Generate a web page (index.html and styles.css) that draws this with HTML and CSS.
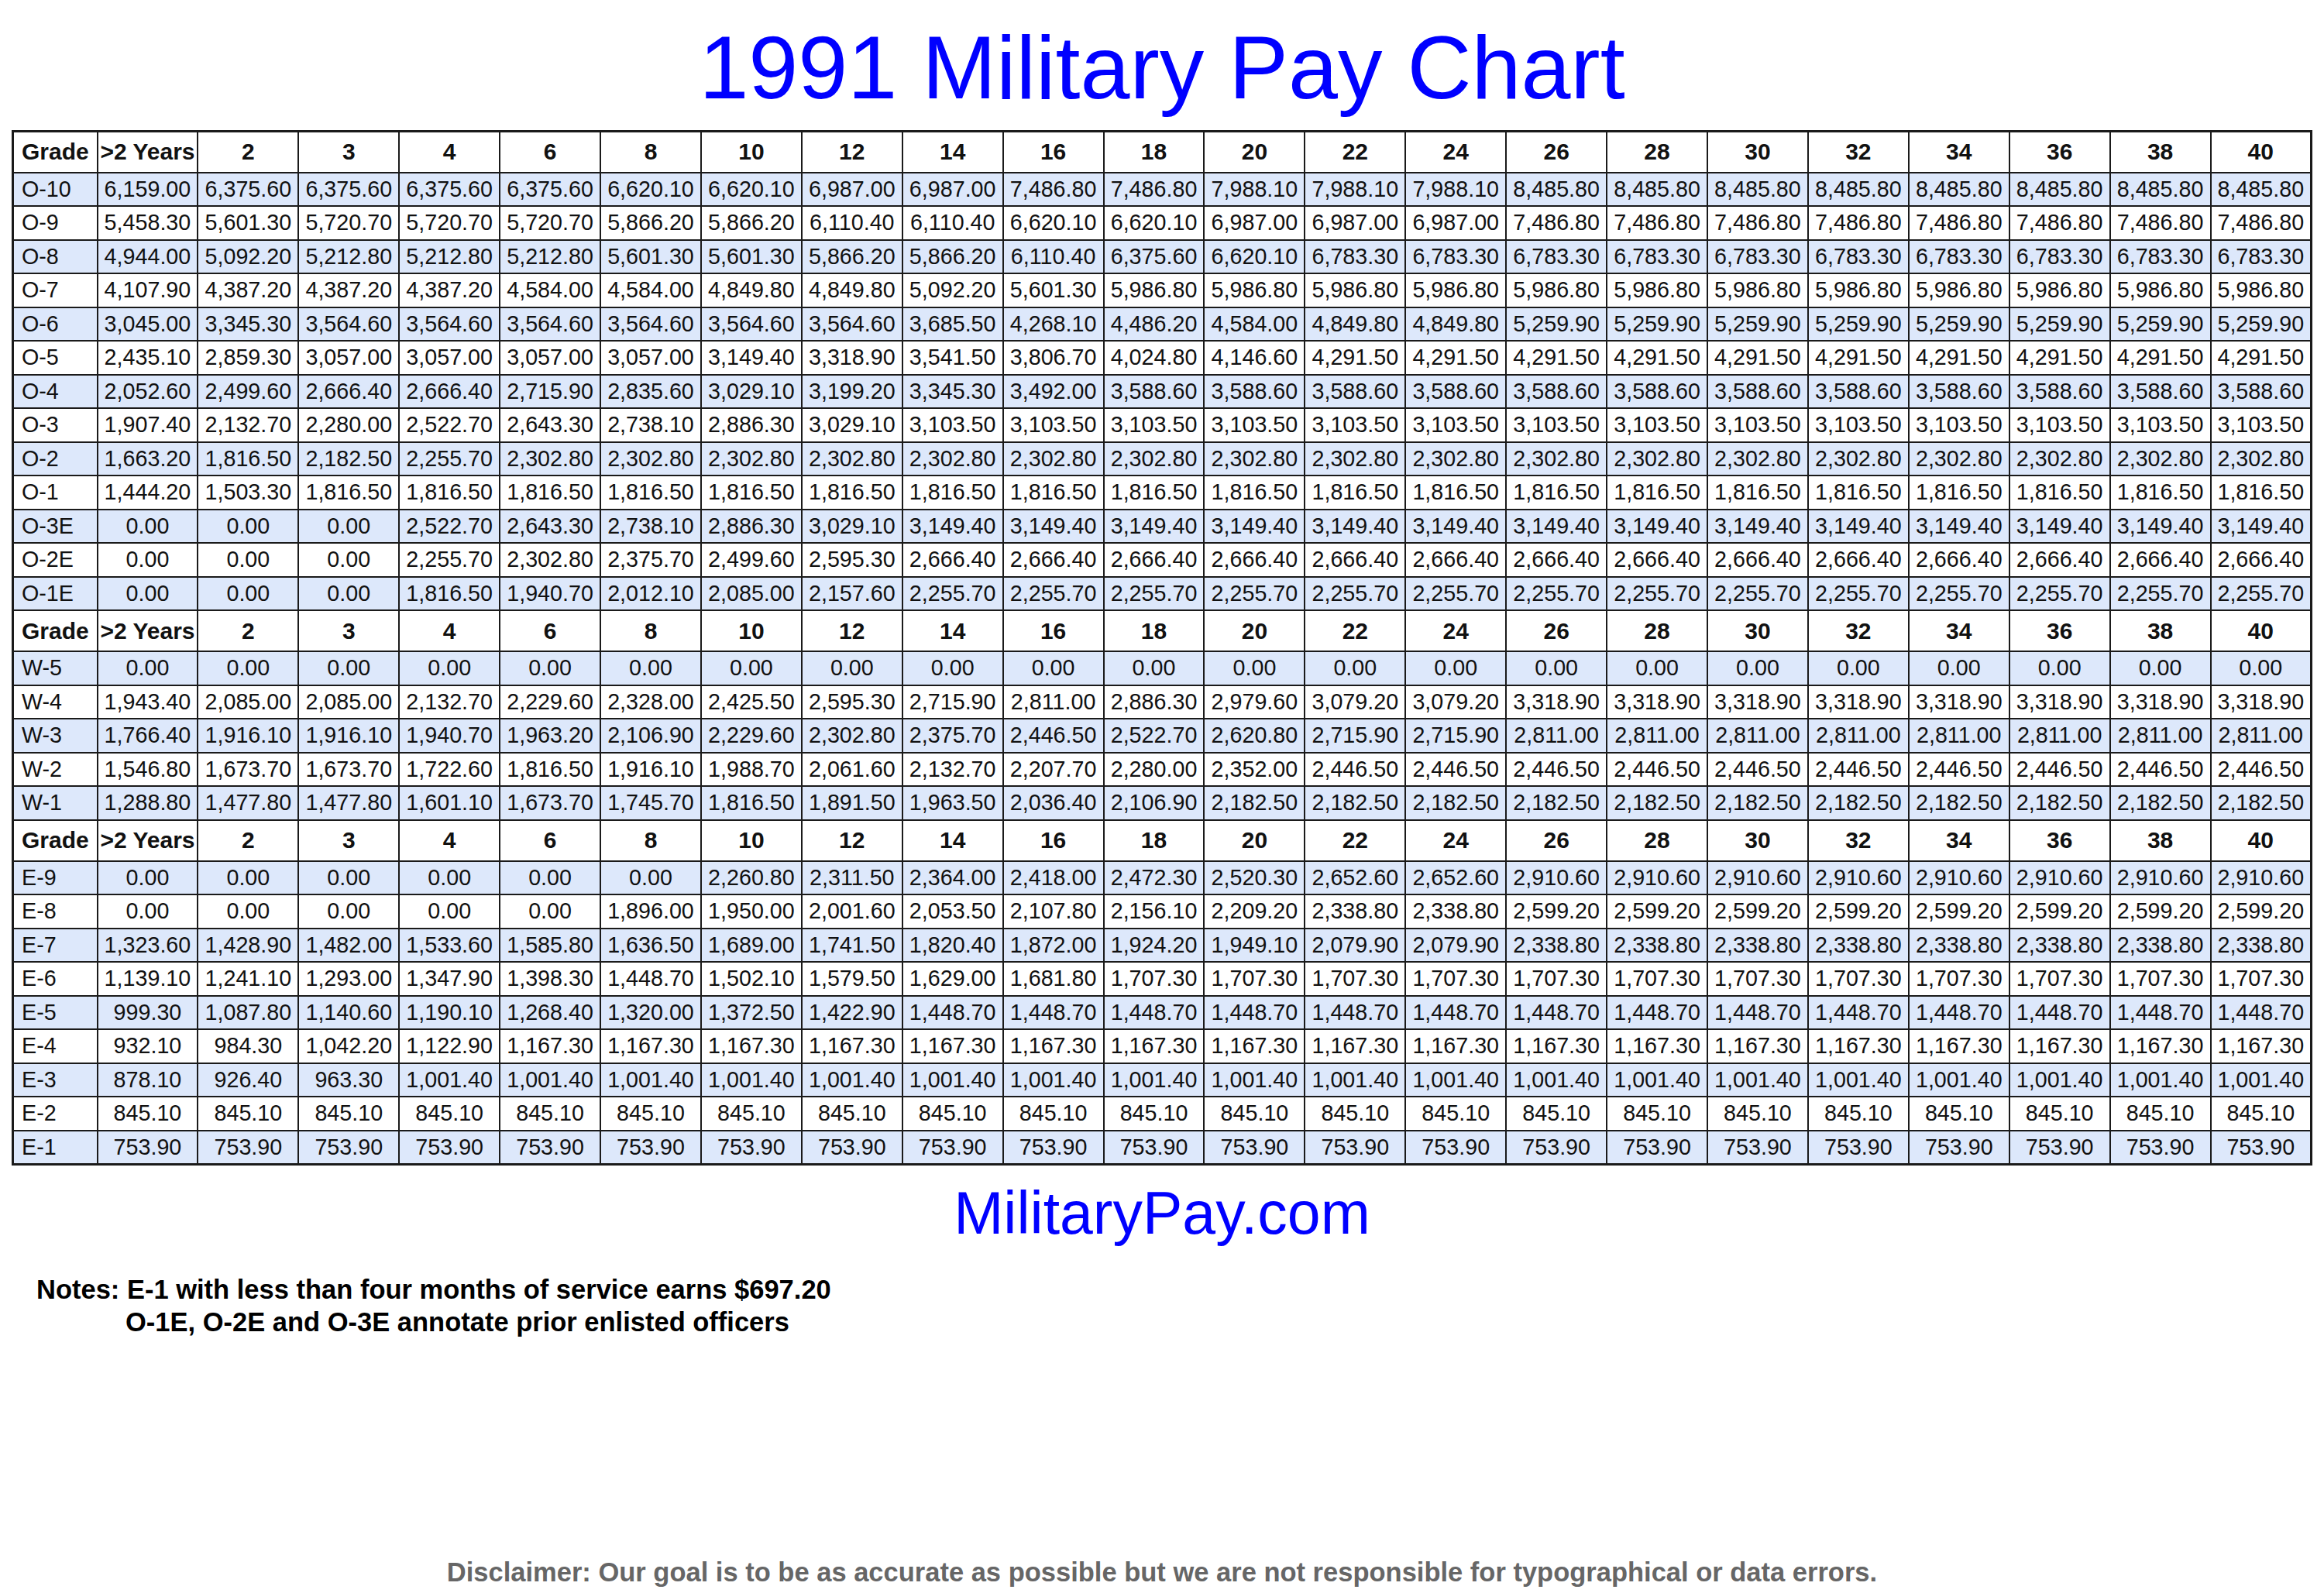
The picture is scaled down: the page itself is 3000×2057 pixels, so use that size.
FILE: index.html
```html
<!DOCTYPE html>
<html lang="en">
<head>
<meta charset="utf-8">
<title>1991 Military Pay Chart</title>
<link rel="stylesheet" href="styles.css">
</head>
<body>
<main class="page">
<h1 class="title">1991 Military Pay Chart</h1>
<table class="pay">
<colgroup><col class="gc"><col span="22"></colgroup>
<tbody>
<tr class="hd"><th class="g">Grade</th><th>&gt;2 Years</th><th>2</th><th>3</th><th>4</th><th>6</th><th>8</th><th>10</th><th>12</th><th>14</th><th>16</th><th>18</th><th>20</th><th>22</th><th>24</th><th>26</th><th>28</th><th>30</th><th>32</th><th>34</th><th>36</th><th>38</th><th>40</th></tr>
<tr class="b"><td class="g">O-10</td><td>6,159.00</td><td>6,375.60</td><td>6,375.60</td><td>6,375.60</td><td>6,375.60</td><td>6,620.10</td><td>6,620.10</td><td>6,987.00</td><td>6,987.00</td><td>7,486.80</td><td>7,486.80</td><td>7,988.10</td><td>7,988.10</td><td>7,988.10</td><td>8,485.80</td><td>8,485.80</td><td>8,485.80</td><td>8,485.80</td><td>8,485.80</td><td>8,485.80</td><td>8,485.80</td><td>8,485.80</td></tr>
<tr><td class="g">O-9</td><td>5,458.30</td><td>5,601.30</td><td>5,720.70</td><td>5,720.70</td><td>5,720.70</td><td>5,866.20</td><td>5,866.20</td><td>6,110.40</td><td>6,110.40</td><td>6,620.10</td><td>6,620.10</td><td>6,987.00</td><td>6,987.00</td><td>6,987.00</td><td>7,486.80</td><td>7,486.80</td><td>7,486.80</td><td>7,486.80</td><td>7,486.80</td><td>7,486.80</td><td>7,486.80</td><td>7,486.80</td></tr>
<tr class="b"><td class="g">O-8</td><td>4,944.00</td><td>5,092.20</td><td>5,212.80</td><td>5,212.80</td><td>5,212.80</td><td>5,601.30</td><td>5,601.30</td><td>5,866.20</td><td>5,866.20</td><td>6,110.40</td><td>6,375.60</td><td>6,620.10</td><td>6,783.30</td><td>6,783.30</td><td>6,783.30</td><td>6,783.30</td><td>6,783.30</td><td>6,783.30</td><td>6,783.30</td><td>6,783.30</td><td>6,783.30</td><td>6,783.30</td></tr>
<tr><td class="g">O-7</td><td>4,107.90</td><td>4,387.20</td><td>4,387.20</td><td>4,387.20</td><td>4,584.00</td><td>4,584.00</td><td>4,849.80</td><td>4,849.80</td><td>5,092.20</td><td>5,601.30</td><td>5,986.80</td><td>5,986.80</td><td>5,986.80</td><td>5,986.80</td><td>5,986.80</td><td>5,986.80</td><td>5,986.80</td><td>5,986.80</td><td>5,986.80</td><td>5,986.80</td><td>5,986.80</td><td>5,986.80</td></tr>
<tr class="b"><td class="g">O-6</td><td>3,045.00</td><td>3,345.30</td><td>3,564.60</td><td>3,564.60</td><td>3,564.60</td><td>3,564.60</td><td>3,564.60</td><td>3,564.60</td><td>3,685.50</td><td>4,268.10</td><td>4,486.20</td><td>4,584.00</td><td>4,849.80</td><td>4,849.80</td><td>5,259.90</td><td>5,259.90</td><td>5,259.90</td><td>5,259.90</td><td>5,259.90</td><td>5,259.90</td><td>5,259.90</td><td>5,259.90</td></tr>
<tr><td class="g">O-5</td><td>2,435.10</td><td>2,859.30</td><td>3,057.00</td><td>3,057.00</td><td>3,057.00</td><td>3,057.00</td><td>3,149.40</td><td>3,318.90</td><td>3,541.50</td><td>3,806.70</td><td>4,024.80</td><td>4,146.60</td><td>4,291.50</td><td>4,291.50</td><td>4,291.50</td><td>4,291.50</td><td>4,291.50</td><td>4,291.50</td><td>4,291.50</td><td>4,291.50</td><td>4,291.50</td><td>4,291.50</td></tr>
<tr class="b"><td class="g">O-4</td><td>2,052.60</td><td>2,499.60</td><td>2,666.40</td><td>2,666.40</td><td>2,715.90</td><td>2,835.60</td><td>3,029.10</td><td>3,199.20</td><td>3,345.30</td><td>3,492.00</td><td>3,588.60</td><td>3,588.60</td><td>3,588.60</td><td>3,588.60</td><td>3,588.60</td><td>3,588.60</td><td>3,588.60</td><td>3,588.60</td><td>3,588.60</td><td>3,588.60</td><td>3,588.60</td><td>3,588.60</td></tr>
<tr><td class="g">O-3</td><td>1,907.40</td><td>2,132.70</td><td>2,280.00</td><td>2,522.70</td><td>2,643.30</td><td>2,738.10</td><td>2,886.30</td><td>3,029.10</td><td>3,103.50</td><td>3,103.50</td><td>3,103.50</td><td>3,103.50</td><td>3,103.50</td><td>3,103.50</td><td>3,103.50</td><td>3,103.50</td><td>3,103.50</td><td>3,103.50</td><td>3,103.50</td><td>3,103.50</td><td>3,103.50</td><td>3,103.50</td></tr>
<tr class="b"><td class="g">O-2</td><td>1,663.20</td><td>1,816.50</td><td>2,182.50</td><td>2,255.70</td><td>2,302.80</td><td>2,302.80</td><td>2,302.80</td><td>2,302.80</td><td>2,302.80</td><td>2,302.80</td><td>2,302.80</td><td>2,302.80</td><td>2,302.80</td><td>2,302.80</td><td>2,302.80</td><td>2,302.80</td><td>2,302.80</td><td>2,302.80</td><td>2,302.80</td><td>2,302.80</td><td>2,302.80</td><td>2,302.80</td></tr>
<tr><td class="g">O-1</td><td>1,444.20</td><td>1,503.30</td><td>1,816.50</td><td>1,816.50</td><td>1,816.50</td><td>1,816.50</td><td>1,816.50</td><td>1,816.50</td><td>1,816.50</td><td>1,816.50</td><td>1,816.50</td><td>1,816.50</td><td>1,816.50</td><td>1,816.50</td><td>1,816.50</td><td>1,816.50</td><td>1,816.50</td><td>1,816.50</td><td>1,816.50</td><td>1,816.50</td><td>1,816.50</td><td>1,816.50</td></tr>
<tr class="b"><td class="g">O-3E</td><td>0.00</td><td>0.00</td><td>0.00</td><td>2,522.70</td><td>2,643.30</td><td>2,738.10</td><td>2,886.30</td><td>3,029.10</td><td>3,149.40</td><td>3,149.40</td><td>3,149.40</td><td>3,149.40</td><td>3,149.40</td><td>3,149.40</td><td>3,149.40</td><td>3,149.40</td><td>3,149.40</td><td>3,149.40</td><td>3,149.40</td><td>3,149.40</td><td>3,149.40</td><td>3,149.40</td></tr>
<tr><td class="g">O-2E</td><td>0.00</td><td>0.00</td><td>0.00</td><td>2,255.70</td><td>2,302.80</td><td>2,375.70</td><td>2,499.60</td><td>2,595.30</td><td>2,666.40</td><td>2,666.40</td><td>2,666.40</td><td>2,666.40</td><td>2,666.40</td><td>2,666.40</td><td>2,666.40</td><td>2,666.40</td><td>2,666.40</td><td>2,666.40</td><td>2,666.40</td><td>2,666.40</td><td>2,666.40</td><td>2,666.40</td></tr>
<tr class="b"><td class="g">O-1E</td><td>0.00</td><td>0.00</td><td>0.00</td><td>1,816.50</td><td>1,940.70</td><td>2,012.10</td><td>2,085.00</td><td>2,157.60</td><td>2,255.70</td><td>2,255.70</td><td>2,255.70</td><td>2,255.70</td><td>2,255.70</td><td>2,255.70</td><td>2,255.70</td><td>2,255.70</td><td>2,255.70</td><td>2,255.70</td><td>2,255.70</td><td>2,255.70</td><td>2,255.70</td><td>2,255.70</td></tr>
<tr class="hd"><th class="g">Grade</th><th>&gt;2 Years</th><th>2</th><th>3</th><th>4</th><th>6</th><th>8</th><th>10</th><th>12</th><th>14</th><th>16</th><th>18</th><th>20</th><th>22</th><th>24</th><th>26</th><th>28</th><th>30</th><th>32</th><th>34</th><th>36</th><th>38</th><th>40</th></tr>
<tr class="b"><td class="g">W-5</td><td>0.00</td><td>0.00</td><td>0.00</td><td>0.00</td><td>0.00</td><td>0.00</td><td>0.00</td><td>0.00</td><td>0.00</td><td>0.00</td><td>0.00</td><td>0.00</td><td>0.00</td><td>0.00</td><td>0.00</td><td>0.00</td><td>0.00</td><td>0.00</td><td>0.00</td><td>0.00</td><td>0.00</td><td>0.00</td></tr>
<tr><td class="g">W-4</td><td>1,943.40</td><td>2,085.00</td><td>2,085.00</td><td>2,132.70</td><td>2,229.60</td><td>2,328.00</td><td>2,425.50</td><td>2,595.30</td><td>2,715.90</td><td>2,811.00</td><td>2,886.30</td><td>2,979.60</td><td>3,079.20</td><td>3,079.20</td><td>3,318.90</td><td>3,318.90</td><td>3,318.90</td><td>3,318.90</td><td>3,318.90</td><td>3,318.90</td><td>3,318.90</td><td>3,318.90</td></tr>
<tr class="b"><td class="g">W-3</td><td>1,766.40</td><td>1,916.10</td><td>1,916.10</td><td>1,940.70</td><td>1,963.20</td><td>2,106.90</td><td>2,229.60</td><td>2,302.80</td><td>2,375.70</td><td>2,446.50</td><td>2,522.70</td><td>2,620.80</td><td>2,715.90</td><td>2,715.90</td><td>2,811.00</td><td>2,811.00</td><td>2,811.00</td><td>2,811.00</td><td>2,811.00</td><td>2,811.00</td><td>2,811.00</td><td>2,811.00</td></tr>
<tr><td class="g">W-2</td><td>1,546.80</td><td>1,673.70</td><td>1,673.70</td><td>1,722.60</td><td>1,816.50</td><td>1,916.10</td><td>1,988.70</td><td>2,061.60</td><td>2,132.70</td><td>2,207.70</td><td>2,280.00</td><td>2,352.00</td><td>2,446.50</td><td>2,446.50</td><td>2,446.50</td><td>2,446.50</td><td>2,446.50</td><td>2,446.50</td><td>2,446.50</td><td>2,446.50</td><td>2,446.50</td><td>2,446.50</td></tr>
<tr class="b"><td class="g">W-1</td><td>1,288.80</td><td>1,477.80</td><td>1,477.80</td><td>1,601.10</td><td>1,673.70</td><td>1,745.70</td><td>1,816.50</td><td>1,891.50</td><td>1,963.50</td><td>2,036.40</td><td>2,106.90</td><td>2,182.50</td><td>2,182.50</td><td>2,182.50</td><td>2,182.50</td><td>2,182.50</td><td>2,182.50</td><td>2,182.50</td><td>2,182.50</td><td>2,182.50</td><td>2,182.50</td><td>2,182.50</td></tr>
<tr class="hd"><th class="g">Grade</th><th>&gt;2 Years</th><th>2</th><th>3</th><th>4</th><th>6</th><th>8</th><th>10</th><th>12</th><th>14</th><th>16</th><th>18</th><th>20</th><th>22</th><th>24</th><th>26</th><th>28</th><th>30</th><th>32</th><th>34</th><th>36</th><th>38</th><th>40</th></tr>
<tr class="b"><td class="g">E-9</td><td>0.00</td><td>0.00</td><td>0.00</td><td>0.00</td><td>0.00</td><td>0.00</td><td>2,260.80</td><td>2,311.50</td><td>2,364.00</td><td>2,418.00</td><td>2,472.30</td><td>2,520.30</td><td>2,652.60</td><td>2,652.60</td><td>2,910.60</td><td>2,910.60</td><td>2,910.60</td><td>2,910.60</td><td>2,910.60</td><td>2,910.60</td><td>2,910.60</td><td>2,910.60</td></tr>
<tr><td class="g">E-8</td><td>0.00</td><td>0.00</td><td>0.00</td><td>0.00</td><td>0.00</td><td>1,896.00</td><td>1,950.00</td><td>2,001.60</td><td>2,053.50</td><td>2,107.80</td><td>2,156.10</td><td>2,209.20</td><td>2,338.80</td><td>2,338.80</td><td>2,599.20</td><td>2,599.20</td><td>2,599.20</td><td>2,599.20</td><td>2,599.20</td><td>2,599.20</td><td>2,599.20</td><td>2,599.20</td></tr>
<tr class="b"><td class="g">E-7</td><td>1,323.60</td><td>1,428.90</td><td>1,482.00</td><td>1,533.60</td><td>1,585.80</td><td>1,636.50</td><td>1,689.00</td><td>1,741.50</td><td>1,820.40</td><td>1,872.00</td><td>1,924.20</td><td>1,949.10</td><td>2,079.90</td><td>2,079.90</td><td>2,338.80</td><td>2,338.80</td><td>2,338.80</td><td>2,338.80</td><td>2,338.80</td><td>2,338.80</td><td>2,338.80</td><td>2,338.80</td></tr>
<tr><td class="g">E-6</td><td>1,139.10</td><td>1,241.10</td><td>1,293.00</td><td>1,347.90</td><td>1,398.30</td><td>1,448.70</td><td>1,502.10</td><td>1,579.50</td><td>1,629.00</td><td>1,681.80</td><td>1,707.30</td><td>1,707.30</td><td>1,707.30</td><td>1,707.30</td><td>1,707.30</td><td>1,707.30</td><td>1,707.30</td><td>1,707.30</td><td>1,707.30</td><td>1,707.30</td><td>1,707.30</td><td>1,707.30</td></tr>
<tr class="b"><td class="g">E-5</td><td>999.30</td><td>1,087.80</td><td>1,140.60</td><td>1,190.10</td><td>1,268.40</td><td>1,320.00</td><td>1,372.50</td><td>1,422.90</td><td>1,448.70</td><td>1,448.70</td><td>1,448.70</td><td>1,448.70</td><td>1,448.70</td><td>1,448.70</td><td>1,448.70</td><td>1,448.70</td><td>1,448.70</td><td>1,448.70</td><td>1,448.70</td><td>1,448.70</td><td>1,448.70</td><td>1,448.70</td></tr>
<tr><td class="g">E-4</td><td>932.10</td><td>984.30</td><td>1,042.20</td><td>1,122.90</td><td>1,167.30</td><td>1,167.30</td><td>1,167.30</td><td>1,167.30</td><td>1,167.30</td><td>1,167.30</td><td>1,167.30</td><td>1,167.30</td><td>1,167.30</td><td>1,167.30</td><td>1,167.30</td><td>1,167.30</td><td>1,167.30</td><td>1,167.30</td><td>1,167.30</td><td>1,167.30</td><td>1,167.30</td><td>1,167.30</td></tr>
<tr class="b"><td class="g">E-3</td><td>878.10</td><td>926.40</td><td>963.30</td><td>1,001.40</td><td>1,001.40</td><td>1,001.40</td><td>1,001.40</td><td>1,001.40</td><td>1,001.40</td><td>1,001.40</td><td>1,001.40</td><td>1,001.40</td><td>1,001.40</td><td>1,001.40</td><td>1,001.40</td><td>1,001.40</td><td>1,001.40</td><td>1,001.40</td><td>1,001.40</td><td>1,001.40</td><td>1,001.40</td><td>1,001.40</td></tr>
<tr><td class="g">E-2</td><td>845.10</td><td>845.10</td><td>845.10</td><td>845.10</td><td>845.10</td><td>845.10</td><td>845.10</td><td>845.10</td><td>845.10</td><td>845.10</td><td>845.10</td><td>845.10</td><td>845.10</td><td>845.10</td><td>845.10</td><td>845.10</td><td>845.10</td><td>845.10</td><td>845.10</td><td>845.10</td><td>845.10</td><td>845.10</td></tr>
<tr class="b"><td class="g">E-1</td><td>753.90</td><td>753.90</td><td>753.90</td><td>753.90</td><td>753.90</td><td>753.90</td><td>753.90</td><td>753.90</td><td>753.90</td><td>753.90</td><td>753.90</td><td>753.90</td><td>753.90</td><td>753.90</td><td>753.90</td><td>753.90</td><td>753.90</td><td>753.90</td><td>753.90</td><td>753.90</td><td>753.90</td><td>753.90</td></tr>
</tbody>
</table>
<p class="site">MilitaryPay.com</p>
<div class="notes">
<div class="line">Notes: E-1 with less than four months of service earns $697.20</div>
<div class="line indent">O-1E, O-2E and O-3E annotate prior enlisted officers</div>
</div>
<p class="disclaimer">Disclaimer: Our goal is to be as accurate as possible but we are not responsible for typographical or data errors.</p>
</main>
</body>
</html>
```
FILE: styles.css
```css
html, body {
  margin: 0;
  padding: 0;
  background: #ffffff;
}

.page {
  width: 3000px;
  min-height: 2057px;
  display: flex;
  flex-direction: column;
  font-family: "Liberation Sans", Arial, sans-serif;
  color: #111111;
}

.title {
  margin: 30px 0 0;
  font-size: 115px;
  line-height: 1;
  font-weight: normal;
  color: #0000ff;
  text-align: center;
}

.pay {
  margin: 23px 0 0 15px;
  width: 2970px;
  border-collapse: collapse;
  table-layout: fixed;
  border: 3px solid #1a1a1a;
}

.pay col.gc {
  width: 109px;
}

.pay tr {
  height: 43.5px;
}

.pay tr.hd {
  height: 53px;
}

.pay td,
.pay th {
  border: 2px solid #1a1a1a;
  padding: 0;
  text-align: center;
  vertical-align: middle;
  white-space: nowrap;
  overflow: hidden;
  color: #111111;
}

.pay td {
  font-size: 28.7px;
  font-weight: normal;
}

.pay th {
  font-size: 30px;
  font-weight: bold;
}

.pay .g {
  text-align: left;
  padding-left: 10px;
}

.pay tr.b td {
  background: #dde8fb;
}

.site {
  margin: 23px 0 0;
  font-size: 77px;
  line-height: 1;
  color: #0000ff;
  text-align: center;
}

.notes {
  margin-top: 39px;
  padding-left: 47px;
  font-size: 34.5px;
  font-weight: bold;
  line-height: 42px;
  color: #000000;
}

.notes .indent {
  padding-left: 115px;
}

.disclaimer {
  margin: auto 0 10px;
  font-size: 34.5px;
  line-height: 1;
  font-weight: bold;
  color: #666666;
  text-align: center;
}
```
